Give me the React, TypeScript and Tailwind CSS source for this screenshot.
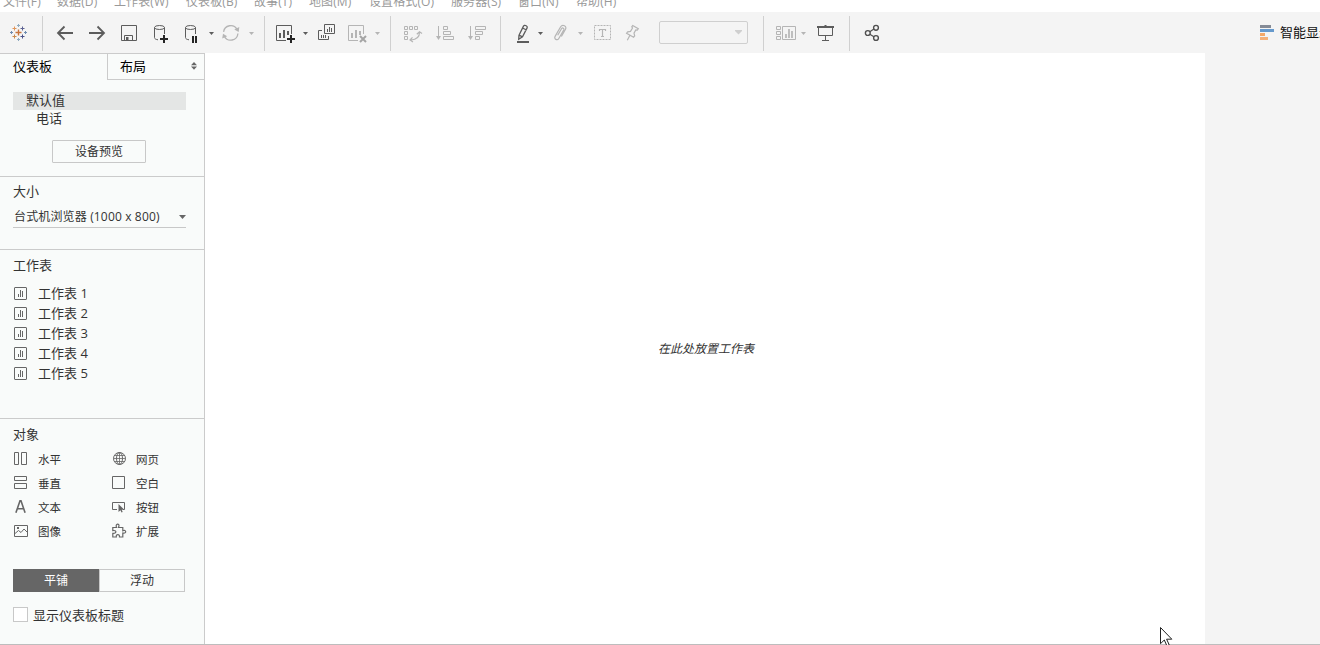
import { useState, type ReactNode } from "react";
import clsx from "clsx";

const menus = [
    { label: "文件(F)", width: "w-[54px]" },
    { label: "数据(D)", width: "w-[57px]" },
    { label: "工作表(W)", width: "w-[72px]" },
    { label: "仪表板(B)", width: "w-[68px]" },
    { label: "故事(T)", width: "w-[55px]" },
    { label: "地图(M)", width: "w-[60px]" },
    { label: "设置格式(O)", width: "w-[82px]" },
    { label: "服务器(S)", width: "w-[67px]" },
    { label: "窗口(N)", width: "w-[58px]" },
    { label: "帮助(H)", width: "w-[60px]" },
];

const sheets = ["工作表 1", "工作表 2", "工作表 3", "工作表 4", "工作表 5"];

function Icon({ className, width = 20, children }: { className?: string; width?: number; children: ReactNode }) {
    return (
        <svg
            width={width}
            height="20"
            viewBox={`0 0 ${width} 20`}
            fill="none"
            stroke="currentColor"
            className={clsx("shrink-0", className)}
        >
            {children}
        </svg>
    );
}

function Caret({ className }: { className: string }) {
    return (
        <svg width="5" height="20" viewBox="0 0 5 20" fill="currentColor" className={clsx("shrink-0", className)}>
            <path d="M0 9h5L2.5 12z" />
        </svg>
    );
}

function Separator({ className }: { className: string }) {
    return <div className={clsx("-mt-[7px] h-[35px] w-px shrink-0 bg-[#d0d0d0]", className)} />;
}

function Toolbar() {
    return (
        <div className="flex h-[41px] shrink-0 items-start overflow-hidden bg-[#f4f4f4] pt-[11px] text-[#5c5c5c]">
            <Icon className="ml-[9px]">
                <path d="M9.5 6.5v6M6.5 9.5h6" stroke="#c8743c" strokeWidth="1.4" />
                <path d="M5.5 3.5v4M3.5 5.5h4" stroke="#e0955a" />
                <path d="M5.5 11.5v4M3.5 13.5h4" stroke="#c98a4c" />
                <path d="M13.5 3.5v4M11.5 5.5h4" stroke="#5c6192" />
                <path d="M13.5 11.5v4M11.5 13.5h4" stroke="#4b5288" />
                <path d="M9.5 1v3M8 2.5h3M9.5 15v3M8 16.5h3" stroke="#8fabc0" />
                <path d="M2.5 8v3M1 9.5h3M16.5 8v3M15 9.5h3" stroke="#6f8db0" />
            </Icon>
            <Separator className="ml-[13px]" />
            <Icon className="ml-3">
                <path d="M2.8 10H18M9.5 3.5 3 10l6.5 6.5" strokeWidth="1.8" />
            </Icon>
            <Icon className="ml-3">
                <path d="M2 10h15.2M10.5 3.5 17 10l-6.5 6.5" strokeWidth="1.8" />
            </Icon>
            <Icon className="ml-3">
                <path d="M2.5 2.5h15v15h-15zM5.5 17v-4.5h8V17" />
                <path d="M7 14h2.5v3.5H7z" fill="currentColor" stroke="none" />
            </Icon>
            <Icon className="ml-3">
                <ellipse cx="8.5" cy="4.5" rx="5" ry="2" />
                <path d="M3.5 4.5v10c0 1.4 1.6 2 3.5 2.3M13.5 4.5V11" />
                <path d="M13 12v8M9 16h8" stroke="#252525" strokeWidth="2" />
            </Icon>
            <Icon className="ml-[11px]">
                <ellipse cx="8.5" cy="4.5" rx="5" ry="2" />
                <path d="M3.5 4.5v10c0 1.4 1.6 2 3.5 2.3M13.5 4.5V11" />
                <path d="M11 13v7M14 13v7" stroke="#252525" strokeWidth="2" />
            </Icon>
            <Caret className="ml-[7px]" />
            <Icon className="ml-[7px] text-[#b5b5b5]">
                <path d="M2.6 8.8A7.2 7.2 0 0 1 16 6.3M16.9 10.5A7.2 7.2 0 0 1 3.3 13.2" strokeWidth="1.3" />
                <path d="m18.3 4-.6 5-4.4-2.4zM1.2 15.5 2 10.7l4.2 2.5z" fill="currentColor" stroke="none" />
            </Icon>
            <Caret className="ml-2 text-[#b5b5b5]" />
            <Separator className="ml-2.5" />
            <Icon className="ml-[11px]">
                <path d="M15.5 11V2.5H.5v15H10" />
                <path d="M4 10v5M8 7v8M12 8v4" strokeWidth="2" />
                <path d="M15 12v8M11 16h8" stroke="#252525" strokeWidth="2" />
            </Icon>
            <Caret className="ml-[7px]" />
            <Icon className="ml-2.5">
                <path d="M6.5 1.5h10v9h-10zM4 7.5H.5v9h10V13" />
                <path d="M9.5 6v3M11.5 4v5M13.5 5v4M3.5 12v3M5.5 12v3M7.5 12v3" />
            </Icon>
            <Icon className="ml-2.5 text-[#b5b5b5]">
                <path d="M15.5 11V2.5H.5v15H10" />
                <path d="M4 10v5M8 7v8M12 8v4" strokeWidth="2" />
                <path d="m12 13 6 6M18 13l-6 6" stroke="#a5a5a5" strokeWidth="2" />
            </Icon>
            <Caret className="ml-[7px] text-[#b5b5b5]" />
            <Separator className="ml-2.5" />
            <Icon className="ml-3 text-[#b5b5b5]">
                <path d="M1.5 3.5h3v3h-3zM6.5 3.5h3v3h-3zM11.5 3.5h3v3h-3zM1.5 8.5h3v3h-3zM1.5 13.5h3v3h-3z" />
                <path d="M16.5 9.5c0 4-3 7-8.5 7.5M13.8 11.3l2.7-2.6L19 10.5M9.5 14.3 7 17l3 2" strokeWidth="1.2" />
            </Icon>
            <Icon className="ml-[13px] text-[#b5b5b5]">
                <path d="M2.5 3v12M7.5 3.5h4v3h-4zM7.5 8.5h7v3h-7zM7.5 13.5h10v3h-10z" />
                <path d="M0 13h5l-2.5 4z" fill="currentColor" stroke="none" />
            </Icon>
            <Icon className="ml-3 text-[#b5b5b5]">
                <path d="M2.5 3v12M7.5 3.5h10v3h-10zM7.5 8.5h7v3h-7zM7.5 13.5h4v3h-4z" />
                <path d="M0 13h5l-2.5 4z" fill="currentColor" stroke="none" />
            </Icon>
            <Separator className="ml-3" />
            <Icon className="ml-[13px]">
                <path d="m5 12.2 4.5-9.1c.4-.8 1.2-1 2-.6l1 .5c.8.4 1 1.1.6 1.9l-4.6 9-3.8 2.4zM5 12.2l3.5 1.7M8.5 5l4 2" strokeWidth="1.3" />
                <path d="M3 19h12" strokeWidth="2" />
            </Icon>
            <Caret className="ml-1" />
            <Icon className="ml-2 text-[#b5b5b5]">
                <path
                    d="m6.7 12.2 3.8-6.4c1-1.6 3.1-.5 2.2 1.2l-4.9 8.5c-1.5 2.5-5.2.5-3.7-2.1L9.5 4c2-3.3 6.8-1 5 2.3l-4.1 7.2"
                    strokeWidth="1.2"
                />
            </Icon>
            <Caret className="ml-[7px] text-[#b5b5b5]" />
            <Icon className="ml-2.5 text-[#b5b5b5]">
                <path d="M1.5 2.5h16v14h-16z" strokeDasharray="2 1" />
                <path d="M6.5 8V6.5h6V8M9.5 6.5v7M8 13.5h3" strokeWidth="1.2" />
            </Icon>
            <Icon className="ml-2.5 text-[#b5b5b5]">
                <path d="m9.7 2.6 5.6 3.2-1 1.3-1.5-.2-1.8 3.3.7 2.7-1.1 1.3-7-4 1.1-1.4 2.8-.4 2-3.4-.7-1.2zM6.8 12.5l-2.5 4.8" strokeWidth="1.2" />
            </Icon>
            <div className="-mt-[2px] ml-4 flex h-[23px] w-[89px] shrink-0 items-center justify-end rounded-[2px] border border-[#cfcfcf] pr-[5px] text-[#cfcfcf]">
                <svg width="7" height="5" viewBox="0 0 7 5" fill="currentColor">
                    <path d="M0 0h7v1L3.5 4.5 0 1z" />
                </svg>
            </div>
            <Separator className="ml-[15px]" />
            <Icon className="ml-3 text-[#b5b5b5]" width={22}>
                <path d="M.5 3.5h4v3h-4zM.5 8.5h4v3h-4zM.5 13.5h4v3h-4zM6.5 3.5h13v13h-13z" />
                <path d="M10 11v4M13 6v9M16 8v7" strokeWidth="1.7" />
            </Icon>
            <Caret className="ml-[3px] text-[#b5b5b5]" />
            <Icon className="ml-2.5">
                <path d="M1 4h17M9.5 2v1" strokeWidth="2" />
                <path d="M2.5 4v8.5h14V4M9.5 12.5v5M6 17.5h7" />
            </Icon>
            <Separator className="ml-[13px]" />
            <Icon className="ml-[13px] text-[#505050]">
                <circle cx="4.8" cy="10" r="2.4" strokeWidth="1.4" />
                <circle cx="13" cy="4.8" r="2.4" strokeWidth="1.4" />
                <circle cx="13" cy="15" r="2.4" strokeWidth="1.4" />
                <path d="m6.8 8.7 4.1-2.6M6.8 11.3l4.1 2.5" strokeWidth="1.2" />
            </Icon>
            <Icon className="ml-[377px]" width={14}>
                <g stroke="none">
                    <path d="M0 2h11v3H0z" fill="#858b96" />
                    <path d="M0 6h14v3H0z" fill="#6699cc" />
                    <path d="M0 10h5v3H0z" fill="#f4a868" />
                    <path d="M0 14h8v3H0z" fill="#f5b078" />
                </g>
            </Icon>
            <span className="-mt-px ml-[6px] shrink-0 whitespace-nowrap text-[13px] leading-5 text-[#111]">智能显示</span>
        </div>
    );
}

function SheetIcon() {
    return (
        <svg width="13" height="13" viewBox="0 0 13 13" fill="none" stroke="#666">
            <rect x=".5" y=".5" width="12" height="12" rx=".5" />
            <path d="M4.5 7v3M6.5 3v7M8.5 4v6" />
        </svg>
    );
}

const objects: { label: string; icon: ReactNode }[] = [
    { label: "水平", icon: <path d="M.5 1.5h4v12h-4zM7.5 1.5h5v12h-5z" /> },
    {
        label: "网页",
        icon: (
            <>
                <circle cx="7.5" cy="7.5" r="6" />
                <ellipse cx="7.5" cy="7.5" rx="3" ry="6" />
                <path d="M7.5 1.5v12M1.5 7.5h12M2.5 4.5h10M2.5 10.5h10" strokeWidth=".8" />
            </>
        ),
    },
    { label: "垂直", icon: <path d="M.5 1.5h12v4H.5zM.5 8.5h12v5H.5z" /> },
    { label: "空白", icon: <path d="M.5 1.5h12v12H.5z" /> },
    { label: "文本", icon: <path d="M1.9 13.8 6 1.8h1l4.1 12M3.3 9.8h6.4" strokeWidth="1.6" /> },
    {
        label: "按钮",
        icon: (
            <>
                <path d="M5 10.5H.5v-7h12v7H11" />
                <path d="M6.5 5v8l2-1.8 1 2.3 1.2-.5-1-2.3h2.6z" fill="#666" stroke="none" />
            </>
        ),
    },
    {
        label: "图像",
        icon: (
            <>
                <path d="M.5 2.5h13v11H.5zM1 10.5l3.5-3 2.5 2L10 6l3.5 3.5" />
                <path d="M3 4h2v2H3z" fill="#666" stroke="none" />
            </>
        ),
    },
    {
        label: "扩展",
        icon: (
            <path
                d="M.8 4.5h3.7C2.9.2 8 .2 6.8 3.5l-.3 1h4.3v3.2c3.4-1.8 4.3 3.4 0 2.3v4H7.5c.4-3.3-3.8-3.3-3.2 0H.8v-3.7c4.1.4 4.1-3.5 0-2.7z"
                strokeWidth="1.2"
            />
        ),
    },
];

function SectionTitle({ children }: { children: ReactNode }) {
    return <h2 className="h-5 text-[13px] leading-5">{children}</h2>;
}

function Sidebar() {
    const [mode, setMode] = useState("平铺");

    return (
        <aside className="flex w-[205px] shrink-0 flex-col border-r border-t border-[#cbcbcb] bg-[#f9fbfa] text-[13px] text-[#333]">
            <div className="flex h-[26px] text-black">
                <div className="w-[107px] pl-[13px] leading-[25px]">仪表板</div>
                <div className="flex flex-1 justify-between border-b border-l border-[#cbcbcb] pl-3 pr-[7px] leading-[25px]">
                    布局
                    <svg width="6" height="8" viewBox="0 0 6 8" fill="#666" className="mt-2">
                        <path d="M0 3.3 3 0l3 3.3zM0 4.5h6L3 7.8z" />
                    </svg>
                </div>
            </div>

            <section className="h-[97px] border-b border-[#cbcbcb] pl-[13px] pt-3">
                <div className="h-[18px] w-[173px] bg-[#e4e6e5] pl-[13px] leading-[17px]">默认值</div>
                <div className="h-[18px] pl-[23px] leading-[17px]">电话</div>
                <button className="ml-[39px] mt-3 h-[23px] w-[94px] rounded-[1px] border border-[#c8c8c8] text-xs leading-[21px]">
                    设备预览
                </button>
            </section>

            <section className="h-[73px] border-b border-[#cbcbcb] px-[13px] pt-1">
                <SectionTitle>大小</SectionTitle>
                <div className="mt-[5px] flex h-[22px] w-[173px] items-center justify-between border-b border-[#c8c8c8] pl-px text-xs">
                    <span className="tracking-[0.15px]">台式机浏览器 (1000 x 800)</span>
                    <svg width="7" height="4" viewBox="0 0 7 4" fill="#666">
                        <path d="M0 0h7L3.5 4z" />
                    </svg>
                </div>
            </section>

            <section className="h-[169px] border-b border-[#cbcbcb] pl-[13px] pt-[5px]">
                <SectionTitle>工作表</SectionTitle>
                <ul className="mt-2">
                    {sheets.map((sheet) => (
                        <li key={sheet} className="flex h-5 items-center gap-[11px] pl-px leading-5">
                            <SheetIcon />
                            {sheet}
                        </li>
                    ))}
                </ul>
            </section>

            <section className="pl-[13px] pt-[5px]">
                <SectionTitle>对象</SectionTitle>
                <div className="mt-1 grid grid-cols-[98px_90px] text-[11.5px]">
                    {objects.map(({ label, icon }) => (
                        <div key={label} className="flex h-6 items-start gap-[9px] pl-px pt-[3px]">
                            <svg width="15" height="15" viewBox="0 0 15 15" fill="none" stroke="#666">
                                {icon}
                            </svg>
                            <span className="leading-[17px]">{label}</span>
                        </div>
                    ))}
                </div>

                <div className="mt-[25px] flex h-[23px] w-[172px] text-xs">
                    {["平铺", "浮动"].map((item) => (
                        <button
                            key={item}
                            onClick={() => setMode(item)}
                            className={clsx(
                                "flex-1 border leading-[21px]",
                                mode === item ? "border-[#666] bg-[#666] text-white" : "border-[#c8c8c8]"
                            )}
                        >
                            {item}
                        </button>
                    ))}
                </div>

                <label className="mt-[13px] flex h-5 items-start gap-[5px] leading-5">
                    <span className="mt-[2px] size-[15px] border border-[#c8c8c8] bg-white" />
                    显示仪表板标题
                </label>
            </section>
        </aside>
    );
}

export default function App() {
    return (
        <div className="relative flex h-[645px] w-[1320px] flex-col overflow-hidden bg-white font-['Open_Sans','Noto_Sans_CJK_SC',sans-serif]">
            <nav className="flex h-3 shrink-0 items-end overflow-hidden pb-px pl-[3px] text-xs leading-[18px] text-[#999]">
                {menus.map((menu) => (
                    <span key={menu.label} className={clsx("shrink-0 whitespace-nowrap tracking-[0.1px]", menu.width)}>
                        {menu.label}
                    </span>
                ))}
            </nav>
            <Toolbar />
            <div className="flex h-[592px] border-b border-[#bdbdbd]">
                <Sidebar />
                <main className="flex w-[1000px] justify-center pl-[2px] pt-[286px] text-xs italic leading-5 text-[#333]">
                    在此处放置工作表
                </main>
                <div className="flex-1 bg-[#f4f4f4]" />
            </div>

            {/* mouse pointer */}
            <svg width="13" height="20" viewBox="0 0 13 20" fill="white" stroke="#222" className="absolute left-[1160px] top-[627px]">
                <path d="M.5.5v16.2l3.8-3.7 2.6 5.8 2.3-1-2.6-5.6h5.2z" />
            </svg>
        </div>
    );
}
